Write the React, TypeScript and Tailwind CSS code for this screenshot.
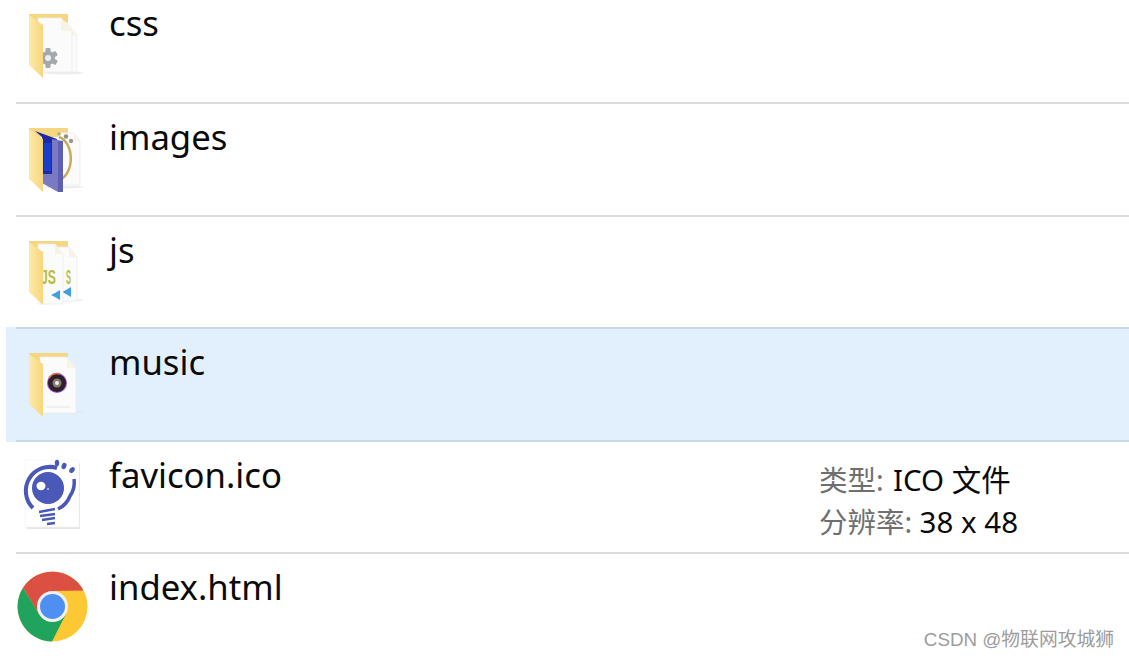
import React from "react";

const SANS = "font-['Noto_Sans','Noto_Sans_CJK_SC',sans-serif]";

function Flap() {
  return (
    <>
      <defs>
        <linearGradient id="fl" x1="0" x2="1" y1="0" y2="0">
          <stop offset="0" stopColor="#fdeaa9" />
          <stop offset="1" stopColor="#f8d67d" />
        </linearGradient>
      </defs>
      <polygon points="13,12 27,22 27,75 13,62" fill="url(#fl)" />
    </>
  );
}

function Shell({ children }: { children: React.ReactNode }) {
  return (
    <svg width="93" height="95" viewBox="0 0 93 95" className="block shrink-0">
      <polygon points="13,11 52,11 52,20 13,20" fill="#f6d781" />
      <ellipse cx="48" cy="70" rx="20" ry="1.5" fill="#e6e6e6" opacity={0.7} />
      {children}
      <Flap />
    </svg>
  );
}

function Paper({ x, y, w, h, fold = 11 }: { x: number; y: number; w: number; h: number; fold?: number }) {
  return (
    <g>
      <polygon
        points={`${x},${y} ${x + w - fold},${y} ${x + w},${y + fold + 2} ${x + w},${y + h} ${x},${y + h}`}
        fill="#fbfbfb"
        stroke="#eeeeee"
        strokeWidth="0.8"
      />
      <polygon points={`${x + w - fold},${y} ${x + w},${y + fold + 2} ${x + w - fold},${y + fold + 2}`} fill="#f7f3e6" />
    </g>
  );
}

function CssIcon() {
  return (
    <Shell>
      <Paper x={40} y={19} w={21} h={50} />
      <Paper x={22} y={15} w={34} h={54} />
      <g fill="#a4a9ae">
        <circle cx="32" cy="55" r="7" />
        <rect x="29.5" y="45" width="5" height="20" rx="1" />
        <rect x="29.5" y="45" width="5" height="20" rx="1" transform="rotate(60 32 55)" />
        <rect x="29.5" y="45" width="5" height="20" rx="1" transform="rotate(120 32 55)" />
      </g>
      <circle cx="32" cy="55" r="3" fill="#eceef0" />
    </Shell>
  );
}

function ImagesIcon() {
  return (
    <Shell>
      <Paper x={42} y={16} w={22} h={52} fold={6} />
      <path d="M43 20 A15 22 0 0 1 43 63" fill="none" stroke="#c8ac5c" strokeWidth="2.5" />
      <circle cx="43" cy="17" r="1.8" fill="#b6a873" />
      <circle cx="50" cy="19.5" r="2.2" fill="#8f8f86" />
      <circle cx="55" cy="24" r="2.2" fill="#9a9a8c" />
      <polygon points="19,14 41,22 36,60 26,60 26,20" fill="#1c2aa4" />
      <polygon points="36,22 47,24 47,75 42,75 26,66 26,57 36,57" fill="#7a7ac4" />
      <polygon points="42,24 47,24 47,75 42,75" fill="#5f5fb0" />
      <polygon points="28,26 35,26 35,54 28,54" fill="#1b3ecb" />
    </Shell>
  );
}

function JsIcon() {
  return (
    <Shell>
      <Paper x={36} y={17} w={25} h={54} fold={8} />
      <text x="50" y="54" textLength="5" lengthAdjust="spacingAndGlyphs" fontFamily="Liberation Sans, sans-serif" fontSize="21" fontWeight="700" fill="#b8bd40">S</text>
      <path d="M50 60 l5 -3 v10 l-5 -3 l-4 -2 z" fill="#3f9fe0" />
      <Paper x={22} y={14} w={25} h={60} fold={8} />
      <text x="25" y="54" textLength="15" lengthAdjust="spacingAndGlyphs" fontFamily="Liberation Sans, sans-serif" fontSize="21" fontWeight="700" fill="#b8bd40">JS</text>
      <path d="M39 63 l5 -3 v10 l-5 -3 l-4 -2 z" fill="#3f9fe0" />
    </Shell>
  );
}

function MusicIcon() {
  return (
    <Shell>
      <Paper x={24} y={15} w={36} h={56} fold={9} />
      <circle cx="41" cy="41" r="10" fill="#a24ad0" />
      <circle cx="41" cy="41" r="9" fill="#2a2227" />
      <path d="M33 36 A9.5 9.5 0 0 1 44 32" fill="none" stroke="#e0723c" strokeWidth="1.6" />
      <circle cx="41" cy="41" r="4.5" fill="#8a7a72" />
      <circle cx="41" cy="41" r="2" fill="#f0eeee" />
      <line x1="30" y1="65" x2="55" y2="65" stroke="#e6e6e6" strokeWidth="1" />
    </Shell>
  );
}

function FaviconIcon() {
  return (
    <svg width="93" height="95" viewBox="0 0 93 95" className="block shrink-0">
      <rect x="11" y="8" width="53" height="66" fill="#e6e6e6" />
      <rect x="9" y="5" width="54" height="67" fill="#ffffff" stroke="#f2f2f2" strokeWidth="0.5" />
      <circle cx="32" cy="33" r="16" fill="#4a58b8" />
      <path d="M17 53 A24 24 0 0 1 41 13" fill="none" stroke="#4a58b8" strokeWidth="4" />
      <path d="M42 54 A24 24 0 0 0 54 41 A24 24 0 0 0 58 24" fill="none" stroke="#4a58b8" strokeWidth="3.5" />
      <ellipse cx="25" cy="31" rx="4.5" ry="4.2" fill="#ffffff" />
      <circle cx="32" cy="34" r="1" fill="#c6cbe8" />
      <ellipse cx="41" cy="8" rx="2.2" ry="3.2" fill="#4a58b8" />
      <ellipse cx="48" cy="11" rx="2.4" ry="3.2" fill="#4a58b8" transform="rotate(20 48 11)" />
      <ellipse cx="56" cy="15" rx="2.4" ry="3.2" fill="#4a58b8" transform="rotate(40 56 15)" />
      <path d="M23 57 L39 54 M24 61 L39 59 M26 65 L39 63 M31 69 L39 68" stroke="#4a58b8" strokeWidth="2.6" fill="none" />
    </svg>
  );
}

function ChromeIcon() {
  return (
    <svg width="93" height="95" viewBox="0 0 93 95" className="block shrink-0">
      <circle cx="36.5" cy="39.5" r="35" fill="#fcc934" />
      <path d="M7 20.8 A35 35 0 0 1 67.5 23.5 L36.5 24 L23 47 Z" fill="#dc5044" />
      <path d="M7 20.8 L23 47 L50 47 L36 74.5 A35 35 0 0 1 7 20.8 Z" fill="#20a35c" />
      <circle cx="36.5" cy="39.5" r="15.5" fill="#f1f1f1" />
      <circle cx="36.5" cy="39.5" r="12.5" fill="#4f8ff2" />
    </svg>
  );
}

function Row({
  name,
  icon,
  outer = "",
  inner = "h-[112.5px] border-[#dcdcdc]",
  children,
}: {
  name: string;
  icon: React.ReactNode;
  outer?: string;
  inner?: string;
  children?: React.ReactNode;
}) {
  return (
    <div className={outer}>
      <div className={`flex items-start border-b-2 ${inner}`}>
        {icon}
        <div className="-mt-[2px] flex-1 text-[34.7px] leading-[44px] text-[#0a0a0a]">{name}</div>
        {children}
      </div>
    </div>
  );
}

export default function App() {
  return (
    <div className={`relative h-[658px] w-[1129px] overflow-hidden bg-white pl-[16px] ${SANS}`}>
      <div className="flex flex-col">
        <Row name="css" icon={<CssIcon />} inner="h-[104px] border-[#dcdcdc] pt-[3px]" />
        <Row name="images" icon={<ImagesIcon />} inner="h-[112.5px] border-[#dcdcdc] pt-[13px]" />
        <Row name="js" icon={<JsIcon />} inner="h-[112.5px] border-[#c6d9e8] pt-[13px]" />
        <Row
          name="music"
          icon={<MusicIcon />}
          outer="-ml-[10px] -mt-[2px] bg-[#e1f0fc] pl-[10px]"
          inner="h-[114.5px] border-t-2 border-[#c6d9e8] pt-[13px]"
        />
        <Row name="favicon.ico" icon={<FaviconIcon />} inner="h-[112.5px] border-[#dcdcdc] pt-[13px]">
          <div className="mt-[4px] w-[310px] shrink-0 text-[28.5px] leading-[41px] text-[#0a0a0a]">
            <div>
              <span className="mr-[2px] text-[#6f6f6f]">类型: </span>
              <span className="text-[29.5px]">ICO 文件</span>
            </div>
            <div>
              <span className="text-[#6f6f6f]">分辨率: </span>
              <span className="text-[29.5px]">38 x 48</span>
            </div>
          </div>
        </Row>
        <Row name="index.html" icon={<ChromeIcon />} inner="h-[104px] border-transparent pt-[13px]" />
      </div>
      <div className="absolute right-[15px] top-[628px] font-['Liberation_Sans','Noto_Sans_CJK_SC',sans-serif] text-[18.8px] leading-[24px] text-[#9c9c9c]">
        CSDN @物联网攻城狮
      </div>
    </div>
  );
}
